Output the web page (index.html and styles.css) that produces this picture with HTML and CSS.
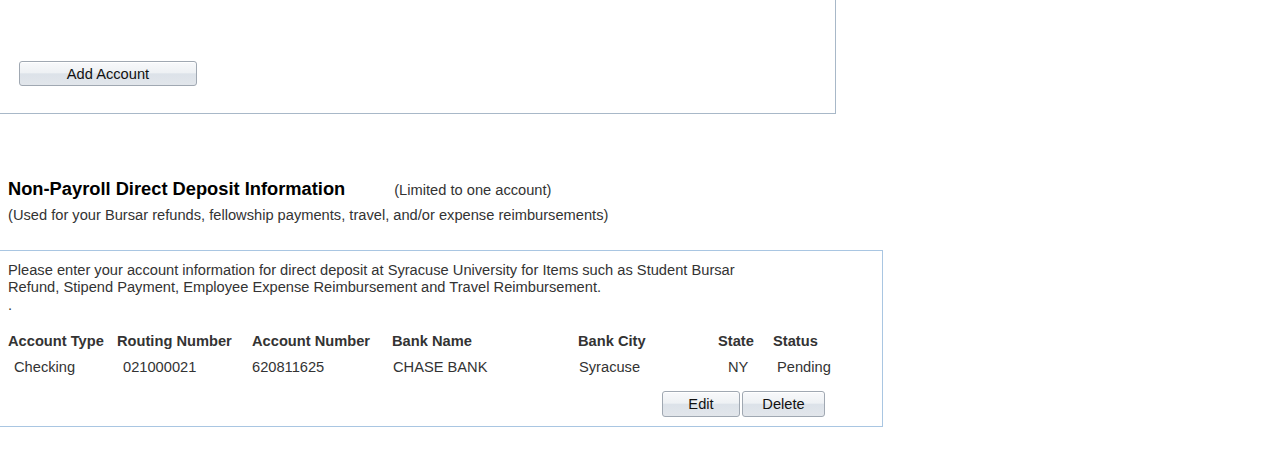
FILE: index.html
```html
<!DOCTYPE html>
<html>
<head>
<meta charset="utf-8">
<link rel="stylesheet" href="styles.css">
</head>
<body>
<div class="panel top-panel">
  <div class="top-actions">
    <button class="btn btn-add">Add Account</button>
  </div>
</div>

<div class="section-head">
  <div class="title-row">
    <h2 class="title">Non-Payroll Direct Deposit Information</h2>
    <span class="note">(Limited to one account)</span>
  </div>
  <p class="subnote">(Used for your Bursar refunds, fellowship payments, travel, and/or expense reimbursements)</p>
</div>

<div class="panel info-panel">
  <p class="intro">Please enter your account information for direct deposit at Syracuse University for Items such as Student Bursar Refund, Stipend Payment, Employee Expense Reimbursement and Travel Reimbursement.</p>
  <p class="dot">.</p>
  <div class="acct-grid">
    <div class="h">Account Type</div>
    <div class="h">Routing Number</div>
    <div class="h">Account Number</div>
    <div class="h">Bank Name</div>
    <div class="h">Bank City</div>
    <div class="h">State</div>
    <div class="h">Status</div>
    <div class="v v-type">Checking</div>
    <div class="v v-routing">021000021</div>
    <div class="v v-acct">620811625</div>
    <div class="v v-bank">CHASE BANK</div>
    <div class="v v-city">Syracuse</div>
    <div class="v v-state">NY</div>
    <div class="v v-status">Pending</div>
  </div>
  <div class="row-actions">
    <button class="btn btn-edit">Edit</button>
    <button class="btn btn-delete">Delete</button>
  </div>
</div>
</body>
</html>
```

FILE: styles.css
```css
html, body {
  margin: 0;
  padding: 0;
  background: #fff;
  font-family: "Liberation Sans", Arial, sans-serif;
  font-size: 14.67px;
  color: #333;
}

.panel {
  box-sizing: border-box;
}

.top-panel {
  width: 838px;
  height: 134px;
  margin-top: -20px;
  margin-left: -2px;
  border-style: solid;
  border-width: 0 1px 1px 1px;
  border-color: #a8b8c8;
}

.top-actions {
  padding-top: 81px;
  padding-left: 20px;
}

.btn {
  font-family: "Liberation Sans", Arial, sans-serif;
  font-size: 14.67px;
  color: #111;
  height: 25px;
  border: 1px solid #a0a8b2;
  border-radius: 3px;
  background: linear-gradient(#f8f9fb 0%, #eef1f4 46%, #dce2e9 52%, #e2e6eb 100%);
  padding: 0;
  margin: 0;
  cursor: pointer;
  box-shadow: inset 0 1px 0 #fff;
}

.btn-add {
  width: 178px;
}

.section-head {
  padding: 64px 0 0 8px;
}

.title-row {
  display: flex;
  align-items: baseline;
}

.title {
  margin: 0;
  font-size: 18.3px;
  font-weight: bold;
  color: #000;
}

.note {
  margin-left: 49px;
  color: #333;
}

.subnote {
  margin: 7px 0 0 0;
  color: #333;
}

.info-panel {
  margin-top: 27px;
  margin-left: -2px;
  width: 885px;
  height: 177px;
  border: 1px solid #a9c6e2;
  padding: 11px 0 0 9px;
}

.intro {
  margin: 0;
  width: 745px;
  line-height: 17px;
}

.dot {
  margin: 0;
  line-height: 18px;
  height: 18px;
}

.acct-grid {
  margin-top: 19px;
  display: grid;
  grid-template-columns: 109px 135px 140px 186px 140px 55px 80px;
  grid-auto-rows: 26px;
  align-items: start;
}

.h {
  font-weight: bold;
  color: #333;
}

.v-type { padding-left: 6px; }
.v-routing { padding-left: 6px; }
.v-bank { padding-left: 1px; }
.v-city { padding-left: 1px; }
.v-state { padding-left: 10px; }
.v-status { padding-left: 4px; }

.row-actions {
  display: flex;
  gap: 2px;
  padding-left: 654px;
  margin-top: 6px;
}

.btn-edit { width: 78px; height: 26px; }
.btn-delete { width: 83px; height: 26px; }
```
